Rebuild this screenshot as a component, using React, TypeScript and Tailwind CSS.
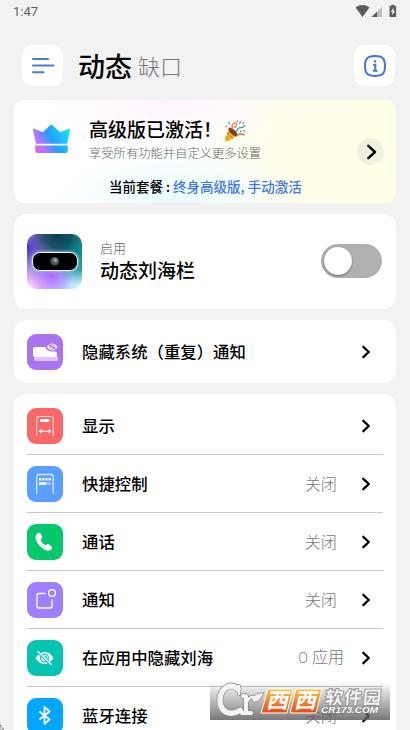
import type { ReactNode } from "react";

function Chevron() {
  return (
    <svg className="shrink-0" width="10" height="16" viewBox="0 0 10 16" fill="none" stroke="#000" strokeWidth="2.3" strokeLinecap="round" strokeLinejoin="round">
      <path d="M2.300 2.800 7.800 8l-5.500 5.200" />
    </svg>
  );
}

function StatusBar() {
  return (
    <div className="flex h-[24px] items-center justify-between pr-[13px] pl-[13px] text-[#5f5f5f]">
      <span className="font-[Roboto] text-[13px] leading-[24px]">1:47</span>
      <svg className="mb-[2px]" width="46" height="14" viewBox="0 0 46 14">
        <path d="M4.500 3.500C8.500.2 14.500.2 18.500 3.500L11.500 13Z" fill="#5c5c5c" />
        <path d="M31 3v10H20.500Z" fill="#bdbdbd" />
        <path d="M26 7.700V13h-5.500Z" fill="#5c5c5c" />
        <path d="M38.500 2h1.800V.8h3V2h1.800v11h-6.600Z" fill="#5c5c5c" />
        <path d="m42.500 3.800-2.600 4.300h1.500v3.200L44 7h-1.500Z" fill="#fff" />
      </svg>
    </div>
  );
}

function Header() {
  return (
    <header className="mt-[21px] flex h-[41px] items-center pr-[15px] pl-[22px]">
      <button className="flex size-[41px] items-center justify-center rounded-[11px] bg-white">
        <svg width="24" height="20" viewBox="0 0 24 20" stroke="#4a79d9" strokeWidth="2" strokeLinecap="round">
          <path d="M2 3h15M2 9.500h20.500M2 16.200h10.500" />
        </svg>
      </button>
      <h1 className="ml-[15px] flex items-center whitespace-nowrap">
        <span className="text-[27px] leading-[41px] font-medium">动态</span>
        <span className="ml-[6px] text-[22px] leading-[41px] font-light text-[#777]">缺口</span>
      </h1>
      <button className="ml-auto flex size-[41px] items-center justify-center rounded-[11px] bg-white">
        <svg width="24" height="24" viewBox="0 0 24 24" fill="none" stroke="#4475dc" strokeWidth="2">
          <path d="M12 2C19.500 2 22 4.500 22 12s-2.500 10-10 10S2 19.500 2 12 4.500 2 12 2Z" />
          <path d="M10 10.800h2.300v6M9.800 16.800h4.700" />
          <path d="M12 6.200v2.200" strokeWidth="2.200" />
        </svg>
      </button>
    </header>
  );
}

function Party() {
  return (
    <svg width="22" height="22" viewBox="0 0 22 22" fill="none" strokeLinecap="round">
      <path d="M5 8 .8 20.300Q.8 21.500 2 21.200L13.500 16Z" fill="#f7b52c" />
      <path d="m3.300 13 5 5.200M2 17l3 3" stroke="#e28c13" strokeWidth="1.500" />
      <ellipse cx="9" cy="12" rx="2.500" ry="5.800" transform="rotate(-46 9 12)" fill="#74452c" />
      <path d="M8.500 8.500Q7 5 9.700 3.500M9.700 3.500q3-1.600 2.700 1.500t-2.100 1.700" stroke="#f07951" strokeWidth="1.300" />
      <path d="M12.500 11.500q1.500-4 4.200-3.800t3.800-2.200" stroke="#3d9ac8" strokeWidth="1.300" />
      <path d="M14 15q2-2 3.500-.8t2.700.1" stroke="#df6947" strokeWidth="1.500" />
      <path d="m4.800 2 .6 2M17 1.800l-1.500 1.500M19.500 10.500l1 .6" stroke="#50aeda" strokeWidth="1.300" />
      <path d="m13 1 .8.500M19 3l.5.500M1.800 6.500l1 .3M16.500 11.500l.5-.5" stroke="#e55844" strokeWidth="1.200" />
    </svg>
  );
}

function PremiumCard() {
  return (
    <section className="relative mt-[14px] h-[103px] overflow-hidden rounded-[10px] bg-[radial-gradient(ellipse_at_40%_0%,#fff3fb_0%,#fff3fb00_36%),radial-gradient(ellipse_at_42%_100%,#e9fcff_0%,#e9fcff00_40%),linear-gradient(100deg,#fff_0%,#fff_44%,#fffee9_72%,#fffee6_100%)] pl-[19px]">
      <div className="flex pt-[15px]">
        <svg className="mt-[9px] shrink-0" width="38" height="30" viewBox="0 0 38 30">
          <defs>
            <linearGradient id="crown" gradientUnits="userSpaceOnUse" x1="1" y1="27" x2="35" y2="7">
              <stop offset="0" stopColor="#e65bf8" />
              <stop offset=".22" stopColor="#bd72f8" />
              <stop offset=".52" stopColor="#289cff" />
              <stop offset="1" stopColor="#12e0fb" />
            </linearGradient>
          </defs>
          <path fill="url(#crown)" d="M3 19.700 0 6q-.2-1.700 1.300-1L10 8.200 17.300 1q1-1 2 0L27 8.200 35.700 5q1.700-.4 1.300 1l-3 13.700ZM2.200 21.600h32.600v4.900q0 2.500-2.500 2.500H4.700q-2.500 0-2.500-2.500Z" />
        </svg>
        <div className="ml-[18px] whitespace-nowrap">
          <div className="flex h-[28px] items-center text-[19px] leading-[28px] font-medium">
            <span>高级版已激活！</span>
            <span className="mt-[3px] ml-[2px]"><Party /></span>
          </div>
          <p className="mt-[1px] text-[12.3px] leading-[19px] font-light text-[#666]">享受所有功能并自定义更多设置</p>
        </div>
      </div>
      <p className="mt-[13px] ml-[76px] text-[13.5px] leading-[20px] font-medium whitespace-nowrap">
        当前套餐 : <span className="text-[#4278df]">终身高级版, 手动激活</span>
      </p>
      <button className="absolute top-[38px] right-[12px] flex size-[27px] items-center justify-center rounded-full bg-[#f2f1df] pl-[2px]">
        <svg width="12" height="18" viewBox="0 0 12 18" fill="none" stroke="#000" strokeWidth="2.400" strokeLinecap="round" strokeLinejoin="round"><path d="m2.300 2.800 6.700 6.200-6.700 6.200" /></svg>
      </button>
    </section>
  );
}

function EnableCard() {
  return (
    <section className="mt-[11px] flex h-[95px] items-center rounded-[13px] bg-white pr-[14px] pl-[13px]">
      <div className="flex size-[55px] items-center justify-center rounded-[10px] bg-[radial-gradient(circle_at_55%_0%,#073a58_0%,#07424ecc_22%,#073a5800_45%),radial-gradient(circle_at_100%_30%,#078b91_0%,#078b91cc_28%,#078b9100_52%),radial-gradient(circle_at_0%_25%,#4139c4_0%,#4139c400_53%),radial-gradient(circle_at_45%_75%,#a86cff_0%,#b87cff00_42%),linear-gradient(100deg,#ffd5f6_0%,#f0b9ff_35%,#b5d0ff_70%,#d5fbff_100%)]">
        <div className="flex h-[19px] w-[46px] items-center justify-center rounded-[8px] border-[1.5px] border-[#eaf4ff] bg-black shadow-[0_0_3px_#b1dcff]">
          <div className="size-[9px] rounded-full bg-[radial-gradient(circle_at_60%_35%,#bec5d1_0%,#68707d_25%,#343b49_60%,#171b24_100%)]" />
        </div>
      </div>
      <div className="mb-[2px] ml-[18px] whitespace-nowrap">
        <p className="text-[13px] leading-[18px] font-light text-[#666]">启用</p>
        <p className="text-[19px] leading-[26px] font-medium">动态刘海栏</p>
      </div>
      <div className="mb-[1px] ml-auto flex h-[34px] w-[61px] items-center rounded-full bg-[#b0b0b0] pl-[3px]">
        <div className="size-[28px] rounded-full bg-white shadow-[0_1px_2px_#666]" />
      </div>
    </section>
  );
}

const icons: Record<string, ReactNode> = {
  hide: (
    <>
      <path d="M7 23h24v2.500q0 1.500-1.500 1.500h-21Q7 27 7 25.500Z" fill="#dbc5fa" />
      <path d="M8 13h10.500q1.500 4.500 6.500 4.500h3.500q1.500.5 1.500 2.500v2q0 1-1 1H8q-2 0-2-2v-6q0-2 2-2Z" fill="#fff" />
      <path d="M20 13q2-4 5.500-3.500T30.500 13q-2 3.500-5 3.500T20 13Z" fill="#fff" />
      <circle cx="25.300" cy="13" r="2.200" stroke="#a974ee" />
      <path d="m21 10 9 6" stroke="#a974ee" strokeWidth="1.200" />
    </>
  ),
  display: (
    <>
      <path d="M9.700 28V11q0-2.500 2.500-2.500h11.500q2.500 0 2.500 2.500v17" stroke="#ffd2d0" strokeWidth="1.200" />
      <rect x="13" y="11" width="9.500" height="3" rx="1.200" fill="#fff" />
      <path d="M13 23.300h10M14.500 21.500l-2 1.800 2 1.800M21.500 21.500l2 1.800-2 1.800" stroke="#fff" strokeWidth="1.100" />
    </>
  ),
  quick: (
    <>
      <path d="M9.700 28V11q0-2.500 2.500-2.500h11.500q2.500 0 2.500 2.500v17" stroke="#d5e8ff" strokeWidth="1.300" />
      <path d="M12 13.300h12.500" stroke="#fff" strokeWidth="2.400" strokeDasharray="2.200 1" />
      <rect x="12" y="16.300" width="12" height="2.400" rx="1" fill="#a9ceff" />
      <rect x="12" y="16.300" width="7" height="2.400" rx="1" fill="#fff" />
    </>
  ),
  call: <path d="M10.300 9.400q2-1.600 3.300.4l1.400 2.700q.6 1.300-.5 2.300l-1 1q1.400 3.300 4.700 5.400l1.500-.8q1.300-.7 2.500.2l2.400 2q1.500 1.500-.3 3-2.300 2-6 .4-6-2.600-9-9.200-2-4.800 1-7.400Z" fill="#fff" />,
  notice: (
    <>
      <path d="M18.500 11.500H12q-2 0-2 2V24q0 2 2 2h11q2 0 2-2v-6.500" stroke="#fff" strokeWidth="1.300" />
      <circle cx="25" cy="11" r="3.400" stroke="#fff" strokeWidth="1.300" />
    </>
  ),
  hiddenApps: (
    <>
      <path d="M8.500 18q3.800-6 9-6t9 6q-3.800 6-9 6t-9-6Z" fill="#fff" />
      <circle cx="17.500" cy="18" r="3.900" stroke="#05c5b2" strokeWidth="1.200" />
      <path d="M18 16q2 .5 1.600 2.500" stroke="#05c5b2" />
      <path d="m10.500 11.500 14 13.500" stroke="#05c5b2" strokeWidth="3" />
      <path d="m11 11.500 13 12.700" stroke="#fff" strokeWidth="1.400" strokeLinecap="round" />
    </>
  ),
  bluetooth: <path d="m12.500 13.500 10 8-5 4.500V9l5 4.500-10 8" stroke="#fff" strokeWidth="1.800" strokeLinejoin="round" />,
};

function Row({ icon, color, label, value, valueClass = "mr-[24px] text-[16.2px]" }: { icon: string; color: string; label: string; value?: string; valueClass?: string }) {
  return (
    <div className="flex h-full w-full items-center whitespace-nowrap">
      <div className={`size-[36px] shrink-0 overflow-hidden rounded-[9px] ${color}`}>
        <svg width="36" height="36" viewBox="0 0 36 36" fill="none">{icons[icon]}</svg>
      </div>
      <span className="mb-[2px] ml-[19px] text-[16.4px] leading-[26px] font-medium">{label}</span>
      <span className={`mb-[2px] ml-auto leading-[26px] font-light text-[#777] ${valueClass}`}>{value}</span>
      <span className="mr-[12px]"><Chevron /></span>
    </div>
  );
}

const rows = [
  { icon: "display", color: "bg-[#f96868]", label: "显示" },
  { icon: "quick", color: "bg-[#5a9fff]", label: "快捷控制", value: "关闭" },
  { icon: "call", color: "bg-[#05c86c]", label: "通话", value: "关闭" },
  { icon: "notice", color: "bg-[#9e80ff]", label: "通知", value: "关闭" },
  { icon: "hiddenApps", color: "bg-[#05c5b2]", label: "在应用中隐藏刘海", value: "0 应用", valueClass: "mr-[17px] text-[16px] font-[Lato,'Noto_Sans_CJK_SC',sans-serif]" },
  { icon: "bluetooth", color: "bg-[#05a6ff]", label: "蓝牙连接", value: "关闭" },
];

function Watermark() {
  return (
    <div className="absolute top-[682px] left-[210px] h-[38px] w-[180px] bg-linear-to-b from-[#77777700] to-[#606060d9]">
      <svg width="180" height="38" viewBox="0 0 180 38">
        <defs>
          <linearGradient id="orange" x1="0" y1="0" x2="0" y2="1">
            <stop stopColor="#ffc247" />
            <stop offset="1" stopColor="#e64b16" />
          </linearGradient>
        </defs>
        {[
          { stroke: "#888", extra: 1.3 },
          { stroke: "#f4f4f4", extra: 0 },
        ].map(({ stroke, extra }) => (
          <g key={stroke} fill="none" stroke={stroke} strokeLinecap="round">
            <path d="M28 7C20 0 10 7 10 18s9 17 20 10.500" strokeWidth={5.500 + extra} />
            <path d="M29 4v8" strokeWidth={2.500 + extra} />
            <path d="M36 14v16M33 14h3M32 31h9" strokeWidth={4 + extra} />
            <path d="M37 20q2-5 6-5" strokeWidth={2.500 + extra} />
            <path d="M43 17q3-5 9-5-2 6-8 7Z" fill={stroke} strokeWidth={1.500 + extra} />
          </g>
        ))}
        <path d="M58 7h25l-6 24H51ZM86 7h26l-6 24H80Z" fill="url(#orange)" stroke="#fff" strokeWidth="1" strokeLinejoin="round" />
        <g fontFamily="Noto Sans CJK SC, sans-serif">
          <text x="0" y="0" fontSize="21" fontWeight="700" fill="#fff" transform="translate(56 26) skewX(-13) scale(1.050 1)">西</text>
          <text x="0" y="0" fontSize="21" fontWeight="700" fill="#fff" transform="translate(84 26) skewX(-13) scale(1.050 1)">西</text>
          <text x="0" y="0" fontSize="18" fontWeight="700" textLength="56" fill="#f4f4f4" stroke="#858585" strokeWidth="1.600" paintOrder="stroke" transform="translate(114.500 21.500) skewX(-6)">软件园</text>
        </g>
        <text x="111" y="31" fontFamily="Liberation Sans, sans-serif" fontSize="9" fontWeight="700" fontStyle="italic" textLength="57" lengthAdjust="spacingAndGlyphs" fill="#fff" stroke="#777" strokeWidth="1" paintOrder="stroke">CR173.COM</text>
      </svg>
    </div>
  );
}

export default function App() {
  return (
    <div className="relative h-[730px] w-[410px] overflow-hidden bg-[#f2f2f2] font-['Noto_Sans_CJK_SC',sans-serif] text-black">
      <StatusBar />
      <Header />
      <main className="mx-[14px]">
        <PremiumCard />
        <EnableCard />
        <section className="mt-[11px] h-[63px] rounded-[13px] bg-white px-[13px]">
          <Row icon="hide" color="bg-[#a974ee]" label="隐藏系统（重复）通知" />
        </section>
        <section className="mt-[11px] rounded-t-[13px] bg-white px-[13px] pt-[3px]">
          {rows.map((row) => (
            <div key={row.label} className="h-[58px] border-b border-[#c8c8c8]"><Row {...row} /></div>
          ))}
        </section>
      </main>
      <Watermark />
      <svg className="absolute bottom-0 left-0" width="5" height="6" viewBox="0 0 5 6"><path d="M0 1 4 6H0Z" fill="#fff" stroke="#222" strokeWidth="1" strokeDasharray="1 1" /></svg>
    </div>
  );
}
